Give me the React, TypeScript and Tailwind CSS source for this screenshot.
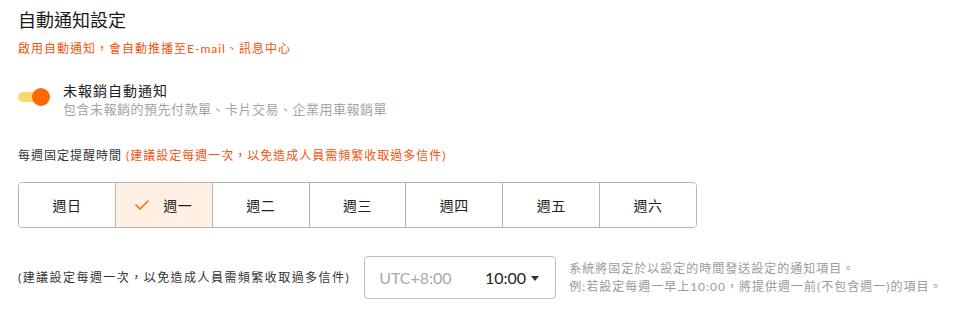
import React, { useState } from 'react';

const days = ['週日', '週一', '週二', '週三', '週四', '週五', '週六'];

const FONT = { fontFamily: 'Lato, "Noto Sans CJK TC", "Noto Sans", sans-serif' };

const App: React.FC = () => {
  const [selected, setSelected] = useState(1);
  const [enabled, setEnabled] = useState(true);

  return (
    <div className="w-[955px] h-[321px] bg-white text-[#222] px-[18px] pt-[8px]" style={FONT}>
      {/* Header */}
      <h2 className="text-[18px] leading-[24px] text-[#1a1a1a]">自動通知設定</h2>
      <p className="mt-[9px] text-[12px] leading-[16px] tracking-[1px] text-[#f2540f]">
        啟用自動通知，會自動推播至E-mail、訊息中心
      </p>

      {/* Toggle row */}
      <div className="mt-[25px] flex items-start">
        <button
          onClick={() => setEnabled(!enabled)}
          className="relative mt-[10px] h-[10px] w-[22px] rounded-full bg-[#ffd56e]"
        >
          <span
            className={`absolute top-1/2 -translate-y-1/2 h-[18px] w-[18px] rounded-full bg-[#ff6a00] ${enabled ? 'left-[14px]' : '-left-[4px]'}`}
          />
        </button>
        <div className="ml-[23px]">
          <div className="text-[14px] leading-[18px] tracking-[1px] text-[#222]">未報銷自動通知</div>
          <div className="mt-[1px] text-[13px] leading-[17px] tracking-[0.5px] text-[#a3a3a3]">
            包含未報銷的預先付款單、卡片交易、企業用車報銷單
          </div>
        </div>
      </div>

      {/* Weekly label */}
      <div className="mt-[30px] text-[12px] leading-[16px] tracking-[1px] text-[#333]">
        每週固定提醒時間 <span className="text-[#f2540f]">(建議設定每週一次，以免造成人員需頻繁收取過多信件)</span>
      </div>

      {/* Day selector */}
      <div className="mt-[18px] flex w-[679px] h-[46px] rounded-[4px] border border-[#b5b5b5] overflow-hidden">
        {days.map((d, i) => (
          <button
            key={d}
            onClick={() => setSelected(i)}
            className={`flex-1 flex items-center justify-center text-[14px] tracking-[0.5px] text-[#222] ${i > 0 ? 'border-l border-[#b5b5b5]' : ''} ${selected === i ? 'bg-[#fff0e3]' : 'bg-white'}`}
          >
            {selected === i && (
              <svg width="14" height="10" viewBox="0 0 14 10" className="mr-[14px]">
                <path d="M1 5 L5 9 L13 1" fill="none" stroke="#ff6a00" strokeWidth="1.6" strokeLinecap="round" strokeLinejoin="round" />
              </svg>
            )}
            {d}
          </button>
        ))}
      </div>

      {/* Time row */}
      <div className="mt-[28px] flex items-center whitespace-nowrap">
        <div className="shrink-0 text-[12px] leading-[16px] tracking-[1.45px] text-[#333]">
          (建議設定每週一次，以免造成人員需頻繁收取過多信件)
        </div>
        <div className="shrink-0 ml-[14px] flex items-center h-[43px] w-[192px] rounded-[4px] border border-[#bdbdbd] pl-[14px] pr-[16px]">
          <span className="text-[16px] text-[#aaa]">UTC+8:00</span>
          <span className="ml-auto text-[16px] text-[#222]">10:00</span>
          <svg width="8" height="5" viewBox="0 0 8 5" className="ml-[5px] mt-[2px]">
            <path d="M0 0 L8 0 L4 5 Z" fill="#333" />
          </svg>
        </div>
        <div className="shrink-0 ml-[13px] text-[12px] leading-[18px] tracking-[1px] text-[#9a9a9a]">
          <div>系統將固定於以設定的時間發送設定的通知項目。</div>
          <div>例:若設定每週一早上10:00，將提供週一前(不包含週一)的項目。</div>
        </div>
      </div>
    </div>
  );
};

export default App;
